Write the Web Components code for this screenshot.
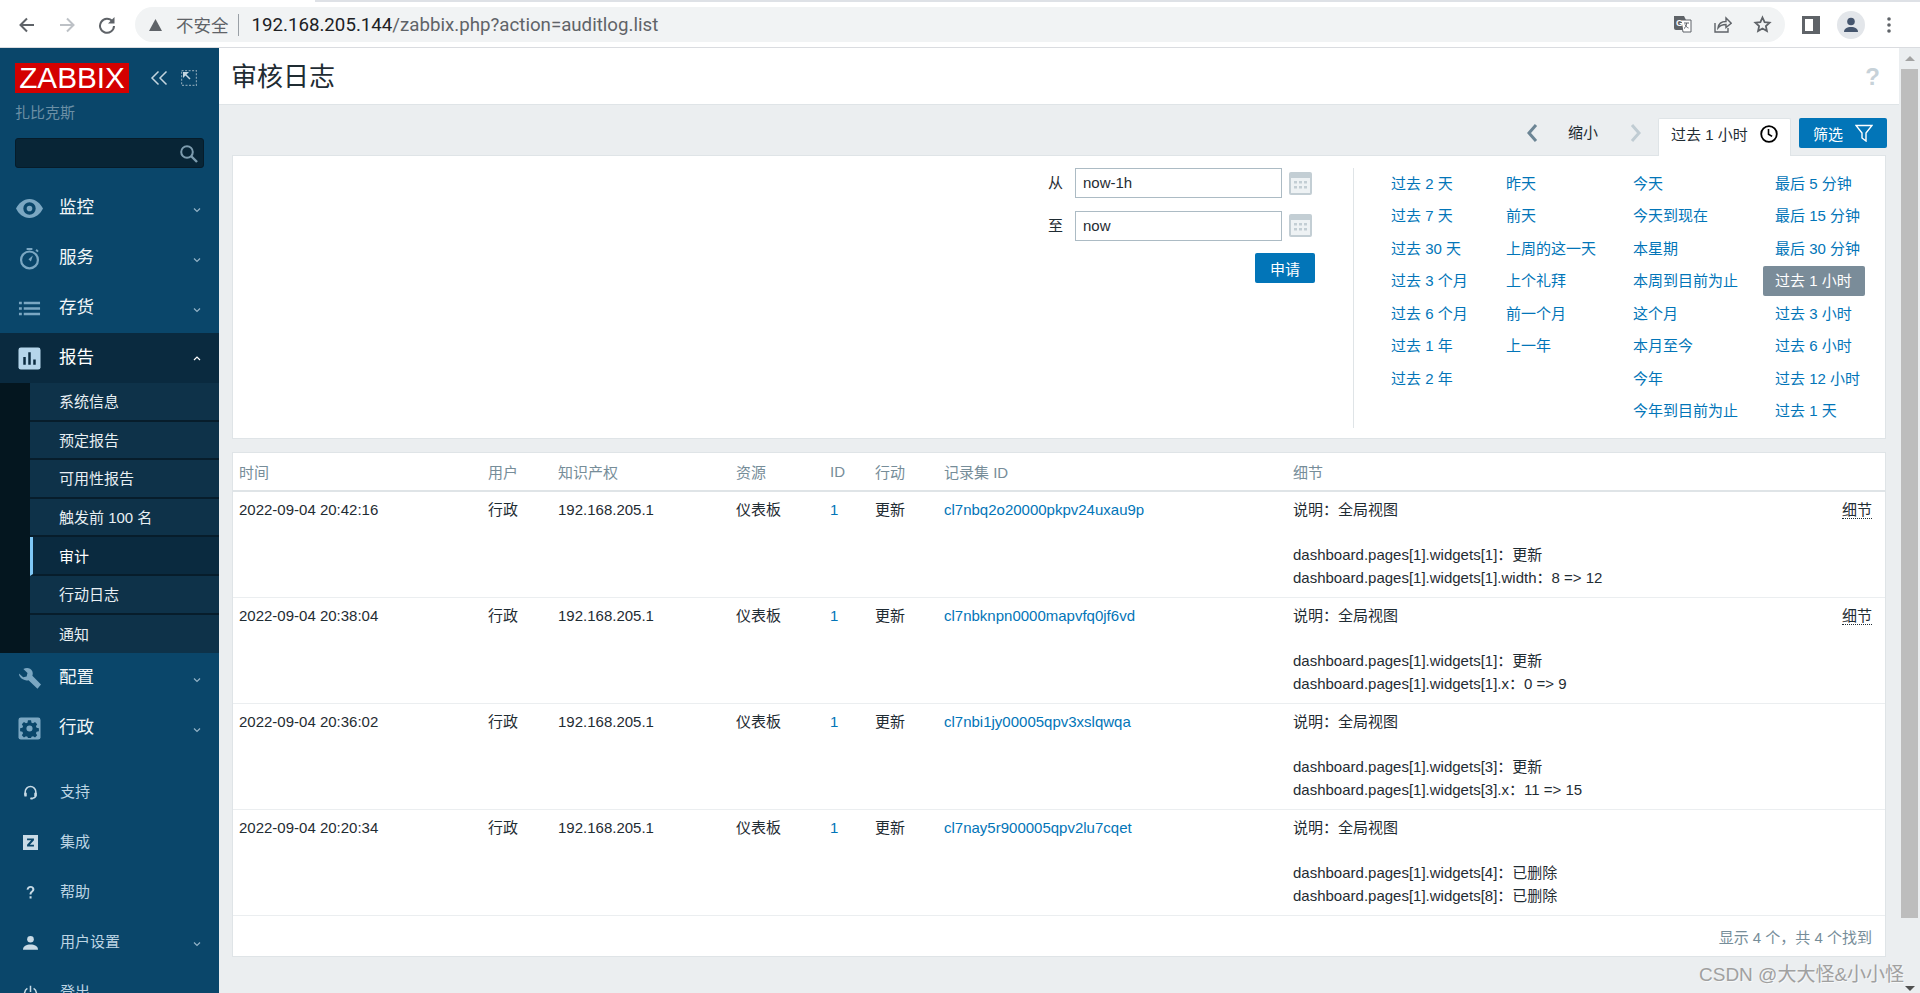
<!DOCTYPE html>
<html lang="zh">
<head>
<meta charset="utf-8">
<title>审核日志</title>
<style>
  html, body { margin: 0; height: 100%; overflow: hidden; }
  body {
    display: flex;
    flex-direction: column;
    height: 993px;
    position: relative;
    font: 15px "Liberation Sans", "Noto Sans CJK SC", sans-serif;
    color: #1f2c33;
    background: #ebeef0;
  }
</style>
</head>
<body>
<browser-bar></browser-bar>
<zbx-app></zbx-app>
<water-mark>CSDN @大大怪&amp;小小怪</water-mark>

<script>
const FONT = '"Liberation Sans", "Noto Sans CJK SC", sans-serif';

// Sidebar icons, drawn on a 24 box
const ICONS = {
  eye: '<path fill="currentColor" fill-rule="evenodd" d="M12 3.500C6.500 3.500 2.200 7.500 0 12c2.200 4.500 6.500 8.500 12 8.500S21.800 16.500 24 12c-2.200-4.500-6.500-8.500-12-8.500zm0 14a5.500 5.500 0 1 1 0-11 5.500 5.500 0 0 1 0 11zm0-3a2.500 2.500 0 1 0 0-5 2.500 2.500 0 0 0 0 5z"/>',
  timer: '<path fill="currentColor" d="M9 1h6v2H9zM18.200 3.600l1.400-1.400 2 2-1.400 1.400z"/><circle cx="12" cy="13.500" r="8.800" fill="none" stroke="currentColor" stroke-width="2.300"/><path fill="currentColor" d="M15.500 8.800l-2 6.200-2.600-2.200z"/>',
  list: '<path fill="currentColor" d="M1 5h3v2.500H1zM6 5h17v2.500H6zM1 10.700h3v2.600H1zM6 10.700h17v2.600H6zM1 16.500h3V19H1zM6 16.500h17V19H6z"/>',
  bars: '<rect x="0.500" y="0.500" width="23" height="23" rx="2.500" fill="currentColor"/><path fill="#0a2a3f" d="M10.700 5.500h2.600v13h-2.600zM5.500 10.500h2.600v8H5.500zM15.900 13h2.600v5.500h-2.600z"/>',
  wrench: '<path fill="currentColor" d="M1 6.800l4.400 4 3.600-.8.900-3.700L5.600 2.200C9 .3 13.200 1 14.800 4.200c.8 1.600.8 3.400.2 4.900L24 18.300 20.300 22.800 11 13.800c-2 .6-4.200.3-6-.9C2.700 11.400.8 9.300 1 6.800z"/>',
  gear: '<rect x="0.500" y="0.500" width="23" height="23" rx="2.500" fill="currentColor"/><path fill="#0a466a" fill-rule="evenodd" d="M10.400 3.500h3.200l.5 2.400 1.600.7 2.100-1.300 2.200 2.200-1.300 2.100.7 1.600 2.400.5v3.200l-2.400.5-.7 1.600 1.300 2.100-2.200 2.200-2.100-1.300-1.600.7-.5 1.300h-3.200l-.5-1.300-1.600-.7-2.100 1.300-2.200-2.200 1.300-2.100-.7-1.600-2.400-.5v-3.200l2.400-.5.7-1.600-1.300-2.100 2.200-2.200 2.100 1.300 1.600-.7zM12 8.800a3.200 3.200 0 1 0 0 6.400 3.200 3.200 0 0 0 0-6.400z"/>',
  headset: '<path fill="none" stroke="currentColor" stroke-width="2.400" d="M3.500 16V11a8.500 8.500 0 0 1 17 0v5c0 3-2 4.800-5 5.200"/><rect x="2" y="12" width="4" height="6.500" rx="1.500" fill="currentColor"/><rect x="18" y="12" width="4" height="6.500" rx="1.500" fill="currentColor"/><rect x="11.500" y="20" width="4.500" height="3" rx="1.200" fill="currentColor"/>',
  zbox: '<rect x="0" y="0" width="24" height="24" fill="currentColor"/><path fill="#0a466a" d="M6.500 5.500h11v3L11 15.500h6.500v3h-11v-3L13 8.500H6.500z"/>',
  question: '<path fill="currentColor" d="M5.800 7.500C6 3.600 8.500 1.500 12.200 1.500c3.600 0 6 2.100 6 5.200 0 2.300-1.200 3.500-2.700 4.700-1.300 1-1.900 1.700-1.900 3.300v.6h-3.100v-.9c0-2.200.8-3.300 2.300-4.500 1.300-1 2.100-1.800 2.100-3 0-1.500-1.100-2.500-2.800-2.500-1.800 0-2.800 1.100-3 2.900zM10.500 18h3.200v3.500h-3.200z"/>',
  user: '<circle cx="12" cy="6.800" r="5.300" fill="currentColor"/><path fill="currentColor" d="M0 23.500c0-5.500 5.500-8.200 12-8.200s12 2.700 12 8.200z"/>',
  power: '<path fill="none" stroke="currentColor" stroke-width="2.400" d="M7 5.500a9.500 9.500 0 1 0 10 0M12 1v10"/>'
};

class BrowserBar extends HTMLElement {
  constructor() {
    super();
    this.attachShadow({ mode: 'open' });
    this.shadowRoot.innerHTML = `
      <style>
        :host { display: block; flex: none; height: 48px; background: #fff; border-bottom: 1px solid #dadce0; box-sizing: border-box; }
        .strip { height: 2px; margin-left: 315px; background: #dee1e6; }
        .row { display: flex; align-items: center; height: 35px; margin-top: 5px; }
        .nav { display: flex; align-items: center; width: 135px; padding-left: 18px; box-sizing: border-box; gap: 22px; flex: none; }
        .nav svg { width: 18px; height: 18px; flex: none; }
        .omni { flex: none; width: 1650px; height: 35px; border-radius: 18px; background: #f1f3f4; display: flex; align-items: center; padding-left: 14px; box-sizing: border-box; font: 17.5px Roboto, "Noto Sans CJK SC", sans-serif; color: #5f6368; }
        .warn { width: 13px; height: 12px; margin-right: 14px; flex: none; }
        .sep { width: 1px; height: 22px; background: #9aa0a6; margin: 0 13px 0 9px; }
        .host { color: #202124; }
        .url { flex: 1; white-space: nowrap; font-size: 18.7px; }
        .tools { display: flex; align-items: center; gap: 21px; padding-right: 13px; }
        .tools svg { width: 19px; height: 19px; display: block; }
        .right { display: flex; align-items: center; flex: 1; padding-left: 17px; }
        .side { width: 18px; height: 18px; flex: none; }
        .avatar { width: 28px; height: 28px; border-radius: 50%; background: #e3e6ea; margin-left: 17px; display: flex; align-items: center; justify-content: center; flex: none; }
        .dots { margin-left: 22px; width: 4px; height: 16px; flex: none; }
      </style>
      <div class="strip"></div>
      <div class="row">
        <div class="nav">
          <svg viewBox="0 0 18 18"><path fill="none" stroke="#5f6368" stroke-width="2" d="M16 9H3M9 2.500L2.500 9 9 15.500"/></svg>
          <svg viewBox="0 0 18 18"><path fill="none" stroke="#bdc1c6" stroke-width="2" d="M2 9h13M9 2.500L15.500 9 9 15.500"/></svg>
          <svg viewBox="0 0 18 18"><path fill="none" stroke="#5f6368" stroke-width="2" d="M14.500 5.500A7 7 0 1 0 16 10"/><path fill="#5f6368" d="M16.500 1v6.500H10z"/></svg>
        </div>
        <div class="omni">
          <svg class="warn" viewBox="0 0 13 12"><path fill="#5f6368" d="M6.500 0L13 12H0z"/></svg>
          <span>不安全</span><span class="sep"></span>
          <span class="url"><span class="host">192.168.205.144</span>/zabbix.php?action=auditlog.list</span>
          <div class="tools">
            <svg viewBox="0 0 19 19"><path fill="#5f6368" d="M1 1h10l2 4v10H3a2 2 0 0 1-2-2z"/><path fill="#fff" stroke="#5f6368" d="M8 5h10v12H10z"/><text x="3" y="11" font-size="9" font-weight="700" fill="#fff" font-family="Liberation Sans">G</text><path fill="none" stroke="#5f6368" d="M11 8h5M13.500 8c0 3-1 4.500-2.500 5.500M12 9.500c.8 2 2 3 3.500 3.500"/></svg>
            <svg viewBox="0 0 19 19"><path fill="none" stroke="#5f6368" stroke-width="1.400" d="M2 8v9h13v-4"/><path fill="none" stroke="#5f6368" stroke-width="1.400" d="M5 13c.5-4 3.500-6.500 8-6.500V3l5.200 5.200L13 12.500V9.500C9.500 9.500 7 10.500 5 13z"/></svg>
            <svg viewBox="0 0 19 19"><path fill="none" stroke="#5f6368" stroke-width="1.800" d="M9.500 2.500l2.100 4.600 5 .6-3.700 3.400 1 4.900-4.400-2.500-4.400 2.500 1-4.900L2.400 7.700l5-.6z"/></svg>
          </div>
        </div>
        <div class="right">
          <svg class="side" viewBox="0 0 18 18"><path fill="#5f6368" d="M0 0h18v18H0zM3 3v12h8V3z"/></svg>
          <div class="avatar"><svg width="16" height="16" viewBox="0 0 16 16"><circle cx="8" cy="4.500" r="3.800" fill="#46566e"/><path fill="#46566e" d="M1 15c0-3.500 3-5 7-5s7 1.500 7 5z"/></svg></div>
          <svg class="dots" viewBox="0 0 4 16"><circle cx="2" cy="2" r="1.800" fill="#5f6368"/><circle cx="2" cy="8" r="1.800" fill="#5f6368"/><circle cx="2" cy="14" r="1.800" fill="#5f6368"/></svg>
        </div>
      </div>`;
  }
}

class ZbxApp extends HTMLElement {
  constructor() {
    super();
    this.attachShadow({ mode: 'open' });
    this.shadowRoot.innerHTML = `
      <style>
        :host { display: flex; flex: 1; min-height: 0; overflow: hidden; }
        .main { flex: 1; min-width: 0; display: flex; flex-direction: column; }
      </style>
      <zbx-sidebar></zbx-sidebar>
      <div class="main">
        <zbx-header></zbx-header>
        <zbx-filter></zbx-filter>
        <audit-table></audit-table>
      </div>
      <fake-scrollbar></fake-scrollbar>`;
  }
}

class ZbxSidebar extends HTMLElement {
  constructor() {
    super();
    this.attachShadow({ mode: 'open' });
    this.shadowRoot.innerHTML = `
      <style>
        :host { display: block; flex: none; width: 219px; background: #0a466a; overflow: hidden; font-family: ${FONT}; }
        .top { height: 135px; box-sizing: border-box; padding: 15px 15px 0; }
        .brandrow { display: flex; align-items: center; }
        .logo { width: 114px; height: 30px; background: #d40000; color: #fff; font: 29.7px/30px "Liberation Sans", sans-serif; text-align: center; }
        .ctl { margin-left: 21px; width: 18px; height: 16px; color: #c4d5df; }
        .ctl2 { margin-left: 13px; width: 16px; height: 16px; color: #c4d5df; }
        .name { margin-top: 10px; color: #6a8fa5; font-size: 15px; line-height: 20px; }
        .search { display: flex; align-items: center; justify-content: flex-end; margin-top: 15px; width: 189px; height: 30px; box-sizing: border-box; background: #082536; border: 1px solid #061c2a; border-radius: 3px; padding-right: 5px; }
        .search svg { width: 19px; height: 19px; color: #7d9cae; }
        .gap { height: 14px; }
      </style>
      <div class="top">
        <div class="brandrow">
          <div class="logo">ZABBIX</div>
          <svg class="ctl" viewBox="0 0 18 16"><path fill="none" stroke="currentColor" stroke-width="1.500" d="M8.500 1.500L2 8l6.500 6.500M16.500 1.500L10 8l6.500 6.500"/></svg>
          <svg class="ctl2" viewBox="0 0 16 16"><path fill="none" stroke="#7d9cae" stroke-dasharray="2 1.500" stroke-width="1.200" d="M.6.6h14.800v14.800H.6z"/><path fill="none" stroke="currentColor" stroke-width="1.500" d="M3 3l6 6"/><path fill="currentColor" d="M2 2h6L2 8z"/></svg>
        </div>
        <div class="name">扎比克斯</div>
        <div class="search"><svg viewBox="0 0 19 19"><circle cx="8" cy="8" r="5.800" fill="none" stroke="currentColor" stroke-width="2"/><path stroke="currentColor" stroke-width="2.400" d="M12 12l6 6"/></svg></div>
      </div>
      <menu-item icon="eye" arrow="down">监控</menu-item>
      <menu-item icon="timer" arrow="down">服务</menu-item>
      <menu-item icon="list" arrow="down">存货</menu-item>
      <menu-item icon="bars" arrow="up" open>报告</menu-item>
      <sub-menu>
        <sub-item>系统信息</sub-item>
        <sub-item>预定报告</sub-item>
        <sub-item>可用性报告</sub-item>
        <sub-item>触发前 100 名</sub-item>
        <sub-item active>审计</sub-item>
        <sub-item>行动日志</sub-item>
        <sub-item>通知</sub-item>
      </sub-menu>
      <menu-item icon="wrench" arrow="down">配置</menu-item>
      <menu-item icon="gear" arrow="down">行政</menu-item>
      <div class="gap"></div>
      <menu-item small icon="headset">支持</menu-item>
      <menu-item small icon="zbox">集成</menu-item>
      <menu-item small icon="question">帮助</menu-item>
      <menu-item small icon="user" arrow="down">用户设置</menu-item>
      <menu-item small icon="power">登出</menu-item>`;
  }
}

class MenuItem extends HTMLElement {
  connectedCallback() {
    if (this.shadowRoot) return;
    this.attachShadow({ mode: 'open' });
    const arrow = this.getAttribute('arrow');
    const chevron = arrow
      ? `<svg class="chev" viewBox="0 0 8 6"><path fill="none" stroke="currentColor" stroke-width="1.200" d="${arrow === 'up' ? 'M1 5l3-3 3 3' : 'M1 1.500l3 3 3-3'}"/></svg>`
      : '';
    this.shadowRoot.innerHTML = `
      <style>
        :host { display: flex; align-items: center; height: 50px; color: #f2f6f8; font-size: 17.5px; position: relative; }
        :host([open]) { background: #0a2a3f; color: #fff; }
        :host([small]) { font-size: 15px; color: #bdd5e4; }
        .ic { width: 23px; height: 23px; margin-left: 18px; flex: none; color: #7ba7c2; }
        :host([icon="eye"]) .ic { width: 27px; height: 27px; margin-left: 16px; margin-right: -2px; }
        :host([open]) .ic { color: #b5d5ea; }
        :host([small]) .ic { width: 15px; height: 15px; margin-left: 23px; color: #c9dbe6; }
        .tx { margin: -2px 0 0 18px; line-height: 24px; }
        :host([small]) .tx { margin: 0 0 0 22px; }
        .chev { position: absolute; right: 18px; top: 50%; width: 8px; height: 6px; margin-top: -1px; color: #93b3c7; }
        :host([open]) .chev { color: #fff; margin-top: -3px; }
      </style>
      <svg class="ic" viewBox="0 0 24 24">${ICONS[this.getAttribute('icon')] || ''}</svg>
      <span class="tx"><slot></slot></span>${chevron}`;
  }
}

class SubMenu extends HTMLElement {
  constructor() {
    super();
    this.attachShadow({ mode: 'open' }).innerHTML = `
      <style>
        :host { display: block; height: 270px; padding-left: 30px; background: #04161f; overflow: hidden; }
      </style>
      <slot></slot>`;
  }
}

class SubItem extends HTMLElement {
  constructor() {
    super();
    this.attachShadow({ mode: 'open' }).innerHTML = `
      <style>
        :host { display: flex; align-items: center; box-sizing: border-box; height: 38.6px; padding: 0 0 1px 29px; background: #0e3249; border-bottom: 2px solid #071d2b; color: #e8eff3; font-size: 15px; }
        :host(:last-child) { border-bottom: 0; }
        :host([active]) { background: #0a2a3f; color: #fff; padding-left: 26px; border-left: 3px solid #7fc8f6; }
      </style>
      <slot></slot>`;
  }
}

class ZbxHeader extends HTMLElement {
  constructor() {
    super();
    this.attachShadow({ mode: 'open' }).innerHTML = `
      <style>
        :host { display: flex; align-items: center; justify-content: space-between; flex: none; height: 57px; box-sizing: border-box; background: #fff; border-bottom: 1px solid #dfe4e7; padding: 1px 19px 0 12px; }
        h1 { margin: 0; font: 400 26px/34px ${FONT}; color: #1f2c33; }
        .help { color: #c7d2d9; font: 700 24px/26px "Liberation Sans", sans-serif; }
      </style>
      <h1>审核日志</h1>
      <span class="help">?</span>`;
  }
}

class ZbxFilter extends HTMLElement {
  constructor() {
    super();
    const rows = [
      ['过去 2 天', '昨天', '今天', '最后 5 分钟'],
      ['过去 7 天', '前天', '今天到现在', '最后 15 分钟'],
      ['过去 30 天', '上周的这一天', '本星期', '最后 30 分钟'],
      ['过去 3 个月', '上个礼拜', '本周到目前为止', '过去 1 小时'],
      ['过去 6 个月', '前一个月', '这个月', '过去 3 小时'],
      ['过去 1 年', '上一年', '本月至今', '过去 6 小时'],
      ['过去 2 年', '', '今年', '过去 12 小时'],
      ['', '', '今年到目前为止', '过去 1 天']
    ];
    const cells = rows.flat().map((t) =>
      t === '过去 1 小时' ? `<span class="lk on">${t}</span>` : `<span class="lk">${t}</span>`
    ).join('');
    const cal = `<svg class="cal" viewBox="0 0 23 23"><rect width="23" height="23" rx="2" fill="#c3ced4"/><rect x="2" y="6" width="19" height="15" fill="#eef2f4"/><g fill="#c3ced4"><rect x="5" y="9" width="3" height="2.500"/><rect x="10" y="9" width="3" height="2.500"/><rect x="15" y="9" width="3" height="2.500"/><rect x="5" y="14" width="3" height="2.500"/><rect x="10" y="14" width="3" height="2.500"/><rect x="15" y="14" width="3" height="2.500"/></g></svg>`;
    this.attachShadow({ mode: 'open' }).innerHTML = `
      <style>
        :host { display: block; flex: none; padding: 13px 13px 0; font-family: ${FONT}; font-size: 15px; color: #1f2c33; }
        .tabs { display: flex; justify-content: flex-end; align-items: flex-start; height: 37px; }
        .arr { width: 12px; height: 20px; margin-top: 5px; flex: none; }
        .zoom { width: 30px; margin: 0 32px 0 30px; line-height: 30px; flex: none; }
        .tab { position: relative; z-index: 1; display: flex; align-items: center; box-sizing: border-box; width: 133px; height: 38px; margin-left: 16px; padding: 0 12px 8px 12px; background: #fff; border: 1px solid #dfe4e7; border-bottom: 0; border-radius: 2px 2px 0 0; }
        .tab svg { width: 18px; height: 18px; margin-left: auto; }
        .btn { display: flex; align-items: center; box-sizing: border-box; background: #0275b8; color: #fff; border-radius: 2px; height: 30px; }
        .fbtn { width: 88px; margin-left: 8px; margin-right: -1px; padding-left: 14px; }
        .fbtn svg { width: 18px; height: 18px; margin-left: 12px; }
        .panel { display: flex; background: #fff; border: 1px solid #dfe4e7; height: 284px; box-sizing: border-box; }
        .form { width: 1120px; flex: none; box-sizing: border-box; padding: 12px 0 0; display: grid; grid-template-columns: 842px 207px 30px; grid-auto-rows: 30px; row-gap: 12.5px; }
        .form label { justify-self: end; padding-right: 12px; line-height: 30px; }
        .inp { box-sizing: border-box; border: 1px solid #acbbc4; padding: 0 7px; line-height: 28px; height: 30px; }
        .cal { width: 23px; height: 23px; align-self: center; margin-left: 7px; }
        .apply { grid-column: 2 / 4; justify-self: end; width: 60px; margin-right: -3px; justify-content: center; }
        .times { margin: 11.5px 0 10px; border-left: 1px solid #dfe4e7; flex: 1; display: grid; grid-template-columns: 115px 127px 142px 1fr; grid-auto-rows: 32.5px; padding: 0 0 0 37px; align-items: center; color: #0275b8; }
        .lk { white-space: nowrap; line-height: 30px; }
        .on { background: #7a8c99; color: #fff; border-radius: 2px; margin-left: -12px; padding: 0 12px; width: 78px; white-space: nowrap; }
      </style>
      <div class="tabs">
        <svg class="arr" viewBox="0 0 12 20"><path fill="none" stroke="#6c8595" stroke-width="3" d="M10 2L3 10l7 8"/></svg>
        <span class="zoom">缩小</span>
        <svg class="arr" viewBox="0 0 12 20"><path fill="none" stroke="#c0ccd3" stroke-width="3" d="M2 2l7 8-7 8"/></svg>
        <div class="tab">过去 1 小时<svg viewBox="0 0 18 18"><circle cx="9" cy="9" r="7.800" fill="none" stroke="#000" stroke-width="1.800"/><path fill="none" stroke="#000" stroke-width="1.600" d="M8.500 4v5.200l3.600 2.200"/></svg></div>
        <div class="btn fbtn">筛选<svg viewBox="0 0 18 18"><path fill="none" stroke="#fff" stroke-width="1.400" d="M1 1.500h16l-6 7.500v8l-4-3V9z"/></svg></div>
      </div>
      <div class="panel">
        <div class="form">
          <label>从</label><div class="inp">now-1h</div>${cal}
          <label>至</label><div class="inp">now</div>${cal}
          <div></div><div class="btn apply">申请</div>
        </div>
        <div class="times">${cells}</div>
      </div>`;
  }
}

class AuditTable extends HTMLElement {
  constructor() {
    super();
    const data = [
      ['2022-09-04 20:42:16', 'cl7nbq2o20000pkpv24uxau9p', ['dashboard.pages[1].widgets[1]：更新', 'dashboard.pages[1].widgets[1].width：8 =&gt; 12'], true],
      ['2022-09-04 20:38:04', 'cl7nbknpn0000mapvfq0jf6vd', ['dashboard.pages[1].widgets[1]：更新', 'dashboard.pages[1].widgets[1].x：0 =&gt; 9'], true],
      ['2022-09-04 20:36:02', 'cl7nbi1jy00005qpv3xslqwqa', ['dashboard.pages[1].widgets[3]：更新', 'dashboard.pages[1].widgets[3].x：11 =&gt; 15'], false],
      ['2022-09-04 20:20:34', 'cl7nay5r900005qpv2lu7cqet', ['dashboard.pages[1].widgets[4]：已删除', 'dashboard.pages[1].widgets[8]：已删除'], false]
    ];
    const rows = data.map(([time, rec, lines, more]) => `
      <div class="row">
        <span>${time}</span><span>行政</span><span>192.168.205.1</span><span>仪表板</span>
        <span class="lnk">1</span><span>更新</span><span class="lnk">${rec}</span>
        <span>说明：全局视图<br><br>${lines.join('<br>')}</span>
        <span class="more">${more ? '<u>细节</u>' : ''}</span>
      </div>`).join('');
    this.attachShadow({ mode: 'open' }).innerHTML = `
      <style>
        :host { display: block; flex: none; margin: 13px 13px 0; background: #fff; border: 1px solid #dfe4e7; font-family: ${FONT}; font-size: 15px; color: #1f2c33; height: 505px; box-sizing: border-box; }
        .head, .row { display: grid; grid-template-columns: 249px 70px 178px 94px 45px 69px 349px 1fr 43px; padding-left: 6px; }
        .head { height: 37px; align-items: center; color: #768d99; border-bottom: 2px solid #dfe4e7; }
        .row { box-sizing: border-box; height: 106px; padding-top: 7px; line-height: 22.5px; border-bottom: 1px solid #ebeef0; }
        .lnk { color: #0275b8; }
        u { text-decoration: none; border-bottom: 1px dotted #1f2c33; }
        .foot { text-align: right; color: #768d99; line-height: 44px; padding-right: 13px; }
      </style>
      <div class="head"><span>时间</span><span>用户</span><span>知识产权</span><span>资源</span><span>ID</span><span>行动</span><span>记录集 ID</span><span>细节</span><span></span></div>
      ${rows}
      <div class="foot">显示 4 个，共 4 个找到</div>`;
  }
}

class FakeScrollbar extends HTMLElement {
  constructor() {
    super();
    this.attachShadow({ mode: 'open' }).innerHTML = `
      <style>
        :host { display: flex; flex-direction: column; align-items: center; flex: none; width: 21px; box-sizing: border-box; background: #ebeef0; }
        .up, .down { width: 0; height: 0; border-left: 5px solid transparent; border-right: 5px solid transparent; }
        .up { border-bottom: 5px solid #a3a3a3; margin: 8px 0; }
        .thumb { width: 17px; height: 849px; background: #bdbdbd; }
        .down { border-top: 5px solid #505050; margin: auto 0 2px; }
      </style>
      <div class="up"></div><div class="thumb"></div><div class="down"></div>`;
  }
}

class WaterMark extends HTMLElement {
  constructor() {
    super();
    this.attachShadow({ mode: 'open' }).innerHTML = `
      <style>
        :host { position: absolute; left: 1699px; top: 962px; font: 19px/26px ${FONT}; color: #a0a0a0; text-shadow: 1px 1px 0 rgba(255,255,255,.6); white-space: nowrap; }
      </style>
      <slot></slot>`;
  }
}

customElements.define('browser-bar', BrowserBar);
customElements.define('zbx-app', ZbxApp);
customElements.define('zbx-sidebar', ZbxSidebar);
customElements.define('menu-item', MenuItem);
customElements.define('sub-menu', SubMenu);
customElements.define('sub-item', SubItem);
customElements.define('zbx-header', ZbxHeader);
customElements.define('zbx-filter', ZbxFilter);
customElements.define('audit-table', AuditTable);
customElements.define('fake-scrollbar', FakeScrollbar);
customElements.define('water-mark', WaterMark);
</script>
</body>
</html>
